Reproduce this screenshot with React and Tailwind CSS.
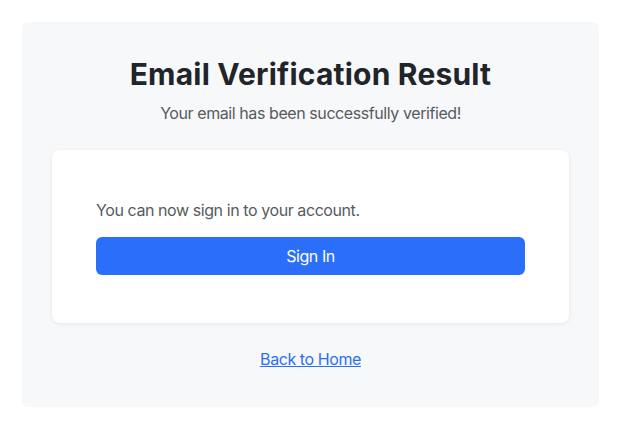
export default function App() {
    return (
        <div className="min-h-screen bg-white p-[22px]" style={{ fontFamily: 'Inter, "Noto Sans", sans-serif' }}>
            <div className="rounded-md bg-[#f7f8fa] px-[30px] pt-[35px] pb-[36px] text-center tracking-[-0.42px]">
                <h1 className="text-[30px] leading-[34px] font-bold text-[#212529] tracking-[0.2px]">
                    Email Verification Result
                </h1>
                <p className="mt-[10px] text-base leading-6 text-[#555b61]">
                    Your email has been successfully verified!
                </p>

                <div className="mt-[25px] rounded-lg bg-white px-[44px] py-[48px] text-left shadow-[0_1px_4px_rgba(0,0,0,0.08)]">
                    <p className="text-base leading-6 text-[#555b61]">You can now sign in to your account.</p>
                    <button className="mt-[15px] flex h-[38px] w-full items-center justify-center rounded-md bg-[#2b6ef9] text-base text-white">
                        Sign In
                    </button>
                </div>

                <div className="mt-[24px]">
                    <a href="#" className="text-base leading-6 text-[#2b6ef9] underline">
                        Back to Home
                    </a>
                </div>
            </div>
        </div>
    );
}
